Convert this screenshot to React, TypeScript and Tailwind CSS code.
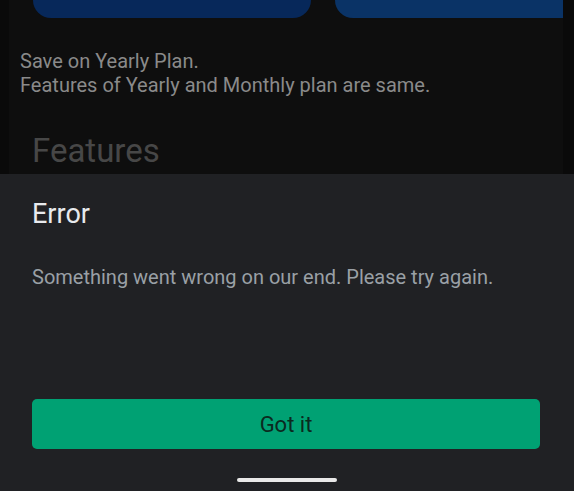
import React from "react";

export default function App() {
  return (
    <div
      className="relative w-[574px] h-[491px] overflow-hidden bg-[#0c0c0c] flex flex-col"
      style={{ fontFamily: "Roboto, 'Noto Sans', sans-serif" }}
    >
      {/* dimmed background page */}
      <div className="h-[174px] flex bg-[#0e0e0e]">
        <div className="w-[9px] bg-[#0a0a0a]" />
        <div className="flex-1 flex flex-col">
          <div className="flex h-[18px] pl-[24px] gap-[24px]">
            <div className="w-[278px] h-full rounded-b-[18px] bg-[#07285a]" />
            <div className="w-[228px] h-full rounded-bl-[18px] bg-[#0a3366]" />
          </div>
          <div className="pl-[11px] pt-[31px] text-[20px] leading-[24px] text-[#8a8a8a]">
            <div>Save on Yearly Plan.</div>
            <div>Features of Yearly and Monthly plan are same.</div>
          </div>
          <div className="pl-[23px] pt-[34px] text-[33px] leading-[40px] text-[#474747]">
            Features
          </div>
        </div>
        <div className="w-[11px] bg-[#0a0a0a]" />
      </div>

      {/* bottom sheet */}
      <div className="flex-1 bg-[#202124] flex flex-col px-[32px]">
        <div className="pt-[24px] text-[27px] leading-[32px] text-[#e8eaed]">Error</div>
        <div className="pt-[35px] text-[20px] leading-[24px] text-[#9aa0a6]">
          Something went wrong on our end. Please try again.
        </div>
        <button className="mt-[110px] h-[50px] w-[508px] rounded-[5px] bg-[#00a173] text-[22px] text-[#0b2a20] flex items-center justify-center">
          Got it
        </button>
        <div className="flex justify-center pt-[29px]">
          <div className="w-[100px] h-[4px] rounded-full bg-[#e8e8e8]" />
        </div>
      </div>
    </div>
  );
}
